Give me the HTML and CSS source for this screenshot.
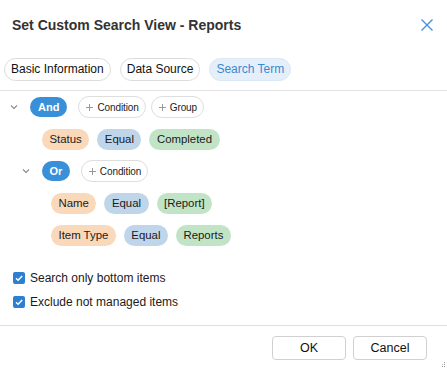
FILE: index.html
```html
<!DOCTYPE html>
<html>
<head>
<meta charset="utf-8">
<link rel="stylesheet" href="styles.css">
</head>
<body>
<div class="dialog">
  <header class="head">
    <h1 class="title">Set Custom Search View - Reports</h1>
    <button class="close" aria-label="Close">
      <svg width="12" height="12" viewBox="0 0 12 12"><path d="M0.5 0.5 L11.5 11.5 M11.5 0.5 L0.5 11.5" stroke="#4a90dc" stroke-width="1.4" fill="none"/></svg>
    </button>
  </header>
  <nav class="tabs">
    <span class="tab">Basic Information</span>
    <span class="tab">Data Source</span>
    <span class="tab tab-active">Search Term</span>
  </nav>
  <section class="tree">
    <div class="row">
      <svg class="chev" width="16" height="16" viewBox="0 0 16 16"><path d="M5 6.5 L8 9.5 L11 6.5" stroke="#8a8a8a" stroke-width="1.1" fill="none"/></svg>
      <span class="op">And</span>
      <span class="add"><svg width="7" height="7" viewBox="0 0 7 7"><path d="M3.5 0 V7 M0 3.5 H7" stroke="#9a9a9a" stroke-width="1" fill="none"/></svg>Condition</span>
      <span class="add"><svg width="7" height="7" viewBox="0 0 7 7"><path d="M3.5 0 V7 M0 3.5 H7" stroke="#9a9a9a" stroke-width="1" fill="none"/></svg>Group</span>
    </div>
    <div class="row terms lvl1">
      <span class="term field">Status</span>
      <span class="term oper">Equal</span>
      <span class="term val">Completed</span>
    </div>
    <div class="row sub">
      <svg class="chev" width="16" height="16" viewBox="0 0 16 16"><path d="M5 6.5 L8 9.5 L11 6.5" stroke="#8a8a8a" stroke-width="1.1" fill="none"/></svg>
      <span class="op op-or">Or</span>
      <span class="add"><svg width="7" height="7" viewBox="0 0 7 7"><path d="M3.5 0 V7 M0 3.5 H7" stroke="#9a9a9a" stroke-width="1" fill="none"/></svg>Condition</span>
    </div>
    <div class="row terms lvl2">
      <span class="term field">Name</span>
      <span class="term oper">Equal</span>
      <span class="term val">[Report]</span>
    </div>
    <div class="row terms lvl2">
      <span class="term field">Item Type</span>
      <span class="term oper">Equal</span>
      <span class="term val">Reports</span>
    </div>
  </section>
  <section class="opts">
    <label class="opt"><span class="box"><svg width="12" height="12" viewBox="0 0 12 12"><path d="M3 6.2 L5.1 8.2 L9.2 3.9" stroke="#fff" stroke-width="1.5" fill="none"/></svg></span>Search only bottom items</label>
    <label class="opt"><span class="box"><svg width="12" height="12" viewBox="0 0 12 12"><path d="M3 6.2 L5.1 8.2 L9.2 3.9" stroke="#fff" stroke-width="1.5" fill="none"/></svg></span>Exclude not managed items</label>
  </section>
  <footer class="foot">
    <button class="btn">OK</button>
    <button class="btn">Cancel</button>
  </footer>
  <svg class="grip" width="5" height="5" viewBox="0 0 5 5"><rect x="3" y="0" width="1" height="1" fill="#999"/><rect x="3" y="2" width="1" height="1" fill="#999"/><rect x="1" y="2" width="1" height="1" fill="#bbb"/><rect x="3" y="4" width="1" height="1" fill="#999"/><rect x="1" y="4" width="1" height="1" fill="#999"/></svg>
</div>
</body>
</html>
```

FILE: styles.css
```css
* { box-sizing: border-box; }
html, body { margin: 0; padding: 0; background: #fff; }
body {
  font-family: "Liberation Sans", Arial, sans-serif;
  color: #222;
}
.dialog {
  position: relative;
  width: 447px;
  height: 368px;
  display: flex;
  flex-direction: column;
  overflow: hidden;
}
.head {
  height: 50px;
  display: flex;
  align-items: center;
  justify-content: space-between;
  padding: 0 14px 0 12px;
}
.title {
  margin: 0;
  font-size: 14px;
  font-weight: bold;
  color: #333;
}
.close {
  border: 0;
  background: none;
  padding: 0;
  width: 12px;
  height: 12px;
  display: flex;
}
.tabs {
  display: flex;
  gap: 9px;
  padding: 8px 4px 9px;
  border-bottom: 1px solid #e2e2e2;
}
.tab {
  height: 23px;
  line-height: 21px;
  border: 1px solid #dcdcdc;
  border-radius: 12px;
  padding: 0 6px;
  font-size: 12px;
  color: #111;
  background: #fff;
}
.tab-active {
  background: #e5eff9;
  border-color: #dbe8f5;
  color: #3a88d2;
}
.tree {
  display: flex;
  flex-direction: column;
  gap: 10px;
  padding: 5px 0 0 6px;
}
.row {
  height: 22px;
  display: flex;
  align-items: center;
}
.chev { margin-right: 8px; }
.sub { margin-left: 12px; }
.op {
  height: 20px;
  line-height: 20px;
  padding: 0 8px;
  border-radius: 10px;
  background: #3a8fd9;
  color: #fff;
  font-weight: bold;
  font-size: 11px;
  margin-right: 11px;
}
.op-or { padding: 0 7.5px; }
.add {
  height: 22px;
  display: flex;
  align-items: center;
  gap: 4px;
  padding: 0 6px 0 7px;
  border: 1px solid #dedede;
  border-radius: 11px;
  font-size: 10px;
  color: #222;
  margin-right: 5px;
  letter-spacing: -0.1px;
}
.terms { gap: 8px; }
.lvl1 { margin-left: 36px; }
.lvl2 { margin-left: 45px; }
.term {
  height: 21px;
  line-height: 21px;
  padding: 0 7.5px;
  border-radius: 11px;
  font-size: 11.4px;
  color: #1a1a1a;
}
.field { background: #fad8ba; }
.oper { background: #bed5ea; }
.val { background: #c2e4c6; }
.opts {
  margin-top: 20px;
  padding-left: 13px;
  display: flex;
  flex-direction: column;
}
.opt {
  height: 24px;
  display: flex;
  align-items: center;
  gap: 5px;
  font-size: 12px;
  color: #1a1a1a;
}
.box {
  width: 12px;
  height: 12px;
  border-radius: 2px;
  background: #2d7fd2;
  display: flex;
}
.foot {
  margin-top: auto;
  height: 43px;
  border-top: 1px solid #dedede;
  display: flex;
  justify-content: flex-end;
  align-items: flex-start;
  gap: 7px;
  padding: 10px 20px 0;
}
.btn {
  width: 74px;
  height: 24px;
  border: 1px solid #d0d0d0;
  border-radius: 4px;
  background: #fff;
  font-family: "Liberation Sans", Arial, sans-serif;
  font-size: 12.5px;
  color: #111;
  padding: 0;
}
.grip {
  position: absolute;
  right: 1px;
  bottom: 1px;
}
```
